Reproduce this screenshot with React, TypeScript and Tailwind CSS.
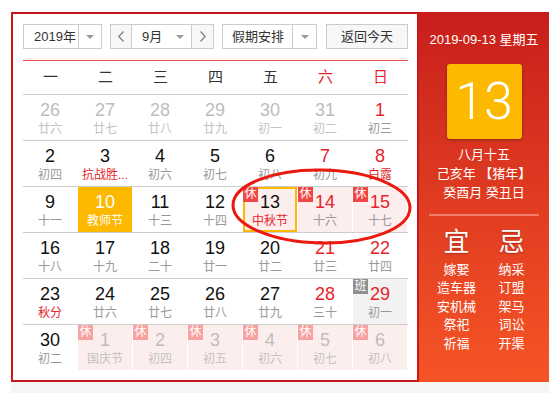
import React from "react";

type Cell = {
  d: string;
  l: string;
  o?: boolean;
  rn?: boolean;
  rl?: boolean;
  b?: "休" | "班";
  pink?: boolean;
  yellow?: boolean;
  today?: boolean;
  gray?: boolean;
};

const rows: Cell[][] = [
  [
    { d: "26", l: "廿六", o: true },
    { d: "27", l: "廿七", o: true },
    { d: "28", l: "廿八", o: true },
    { d: "29", l: "廿九", o: true },
    { d: "30", l: "初一", o: true },
    { d: "31", l: "初二", o: true },
    { d: "1", l: "初三", rn: true },
  ],
  [
    { d: "2", l: "初四" },
    { d: "3", l: "抗战胜...", rl: true },
    { d: "4", l: "初六" },
    { d: "5", l: "初七" },
    { d: "6", l: "初八" },
    { d: "7", l: "初九", rn: true },
    { d: "8", l: "白露", rn: true, rl: true },
  ],
  [
    { d: "9", l: "十一" },
    { d: "10", l: "教师节", yellow: true },
    { d: "11", l: "十三" },
    { d: "12", l: "十四" },
    { d: "13", l: "中秋节", rl: true, b: "休", pink: true, today: true },
    { d: "14", l: "十六", rn: true, b: "休", pink: true },
    { d: "15", l: "十七", rn: true, b: "休", pink: true },
  ],
  [
    { d: "16", l: "十八" },
    { d: "17", l: "十九" },
    { d: "18", l: "二十" },
    { d: "19", l: "廿一" },
    { d: "20", l: "廿二" },
    { d: "21", l: "廿三", rn: true },
    { d: "22", l: "廿四", rn: true },
  ],
  [
    { d: "23", l: "秋分", rl: true },
    { d: "24", l: "廿六" },
    { d: "25", l: "廿七" },
    { d: "26", l: "廿八" },
    { d: "27", l: "廿九" },
    { d: "28", l: "三十", rn: true },
    { d: "29", l: "初一", rn: true, b: "班", gray: true },
  ],
  [
    { d: "30", l: "初二" },
    { d: "1", l: "国庆节", o: true, b: "休", pink: true },
    { d: "2", l: "初四", o: true, b: "休", pink: true },
    { d: "3", l: "初五", o: true, b: "休", pink: true },
    { d: "4", l: "初六", o: true, b: "休", pink: true },
    { d: "5", l: "初七", o: true, b: "休", pink: true },
    { d: "6", l: "初八", o: true, b: "休", pink: true },
  ],
];

function Tri() {
  return (
    <svg width="8" height="4" viewBox="0 0 8 4">
      <path d="M0 0h8L4 4z" fill="#999" />
    </svg>
  );
}

function Chev({ left }: { left?: boolean }) {
  return (
    <svg width="6" height="11" viewBox="0 0 6 11">
      <polyline
        points={left ? "5.5,0.5 0.8,5.5 5.5,10.5" : "0.5,0.5 5.2,5.5 0.5,10.5"}
        fill="none"
        stroke="#777"
        strokeWidth="1.1"
      />
    </svg>
  );
}

function DayCell({ c }: { c: Cell }) {
  let bg = "";
  if (c.yellow) bg = "bg-[#fdb900]";
  else if (c.pink) bg = "bg-[#fdeeee]";
  else if (c.gray) bg = "bg-[#f2f2f2]";
  let num = "text-[#111]";
  if (c.yellow) num = "text-white";
  else if (c.o) num = "text-[#bdbdbd]";
  else if (c.rn) num = "text-[#e5252b]";
  let lun = "text-[#999]";
  if (c.yellow) lun = "text-white";
  else if (c.o) lun = "text-[#c2c2c2]";
  else if (c.rl) lun = "text-[#e5252b]";
  let badge = "";
  if (c.b === "班") badge = "bg-[#8f8f8f]";
  else if (c.o) badge = "bg-[#f7a1a1]";
  else badge = "bg-[#f04646]";
  return (
    <div className={`relative flex h-[45px] w-[54px] flex-col items-center ${bg} ${c.today ? "shadow-[inset_0_0_0_2px_#fcb900]" : ""}`}>
      {c.b && (
        <div className={`absolute left-0 top-0 h-[15px] w-[15px] text-center text-[12px] leading-[15px] text-white ${badge}`}>
          {c.b}
        </div>
      )}
      <div className={`mt-[5px] text-[18px] leading-[20px] ${num}`}>{c.d}</div>
      <div className={`mt-[2px] whitespace-nowrap text-[12px] leading-[14px] ${lun}`}>{c.l}</div>
    </div>
  );
}

export default function App() {
  const weeks = ["一", "二", "三", "四", "五", "六", "日"];
  const yi = ["嫁娶", "造车器", "安机械", "祭祀", "祈福"];
  const ji = ["纳采", "订盟", "架马", "词讼", "开渠"];
  return (
    <div className="min-h-[393px] bg-white pt-[12px] font-[Liberation_Sans,Noto_Sans_CJK_SC,sans-serif]">
      <div className="relative ml-[11px] flex w-[538px]">
        <div className="h-[370px] w-[408px] border-2 border-[#c9181b] pl-[10px] pr-[9px] pt-[10px]">
          <div className="flex h-[25px] text-[13px] text-[#333]">
            <div className="flex w-[79px] border border-[#cccccc]">
              <div className="flex w-[54px] items-center pl-[10px]">2019年</div>
              <div className="flex flex-1 items-center justify-center border-l border-[#cccccc]">
                <Tri />
              </div>
            </div>
            <div className="ml-[8px] flex w-[104px] border border-[#cccccc]">
              <div className="flex w-[21px] items-center justify-center border-r border-[#cccccc] bg-[#f7f7f7]">
                <Chev left />
              </div>
              <div className="flex w-[59px] items-center justify-between pl-[10px] pr-[7px]">
                <span>9月</span>
                <Tri />
              </div>
              <div className="flex flex-1 items-center justify-center border-l border-[#cccccc] bg-[#f7f7f7]">
                <Chev />
              </div>
            </div>
            <div className="ml-[8px] flex w-[95px] border border-[#cccccc]">
              <div className="flex w-[69px] items-center pl-[9px]">假期安排</div>
              <div className="flex flex-1 items-center justify-center border-l border-[#cccccc]">
                <Tri />
              </div>
            </div>
            <div className="ml-[9px] flex w-[82px] items-center justify-center border border-[#cccccc] bg-[#f7f7f7]">
              返回今天
            </div>
          </div>
          <div className="mt-[11px] h-px w-[385px] bg-[#ef4a4a]" />
          <div className="grid h-[33px] w-[385px] grid-cols-7 items-center text-center text-[15px]">
            {weeks.map((w, i) => (
              <div key={w} className={i >= 5 ? "text-[#e5252b]" : "text-[#333]"}>
                {w}
              </div>
            ))}
          </div>
          {rows.map((r, ri) => (
            <div key={ri} className="grid w-[385px] grid-cols-7 border-t border-[#cdcdcd]">
              {r.map((c, ci) => (
                <DayCell key={ci} c={c} />
              ))}
            </div>
          ))}
        </div>
        <div className="flex h-[370px] w-[130px] flex-col items-center bg-linear-to-b from-[#c81d1c] to-[#f65426] pt-[18px] text-white">
          <div className="text-[13px] leading-[20px]">2019-09-13 星期五</div>
          <div className="mt-[14px] flex h-[75px] w-[75px] items-center justify-center rounded-[3px] bg-[#fdb900] shadow-[0_1px_3px_rgba(0,0,0,0.35)]">
            <span className="font-[Roboto,sans-serif] text-[52px] font-light leading-none">13</span>
          </div>
          <div className="mt-[6px] text-center text-[13px] leading-[19px]">
            <div>八月十五</div>
            <div>己亥年 【猪年】</div>
            <div>癸酉月 癸丑日</div>
          </div>
          <div className="mt-[12px] h-[2px] w-[110px] bg-[#ef7d6a]" />
          <div className="mt-[11px] grid w-[110px] grid-cols-2 text-center">
            <div className="text-[26px] leading-[30px] [text-shadow:0_1px_2px_rgba(0,0,0,0.3)]">宜</div>
            <div className="text-[26px] leading-[30px] [text-shadow:0_1px_2px_rgba(0,0,0,0.3)]">忌</div>
            <div className="mt-[4px] text-[13px] leading-[18.4px]">
              {yi.map((t) => (
                <div key={t}>{t}</div>
              ))}
            </div>
            <div className="mt-[4px] text-[13px] leading-[18.4px]">
              {ji.map((t) => (
                <div key={t}>{t}</div>
              ))}
            </div>
          </div>
        </div>
        <svg className="pointer-events-none absolute left-0 top-0" width="538" height="370">
          <ellipse cx="310.5" cy="194.5" rx="88.5" ry="36.5" fill="none" stroke="#ea1a10" strokeWidth="3" transform="rotate(1 310.5 194.5)" />
        </svg>
      </div>
      <div className="ml-[11px] h-[11px] w-[538px] bg-[#f5f5f5]" />
    </div>
  );
}
